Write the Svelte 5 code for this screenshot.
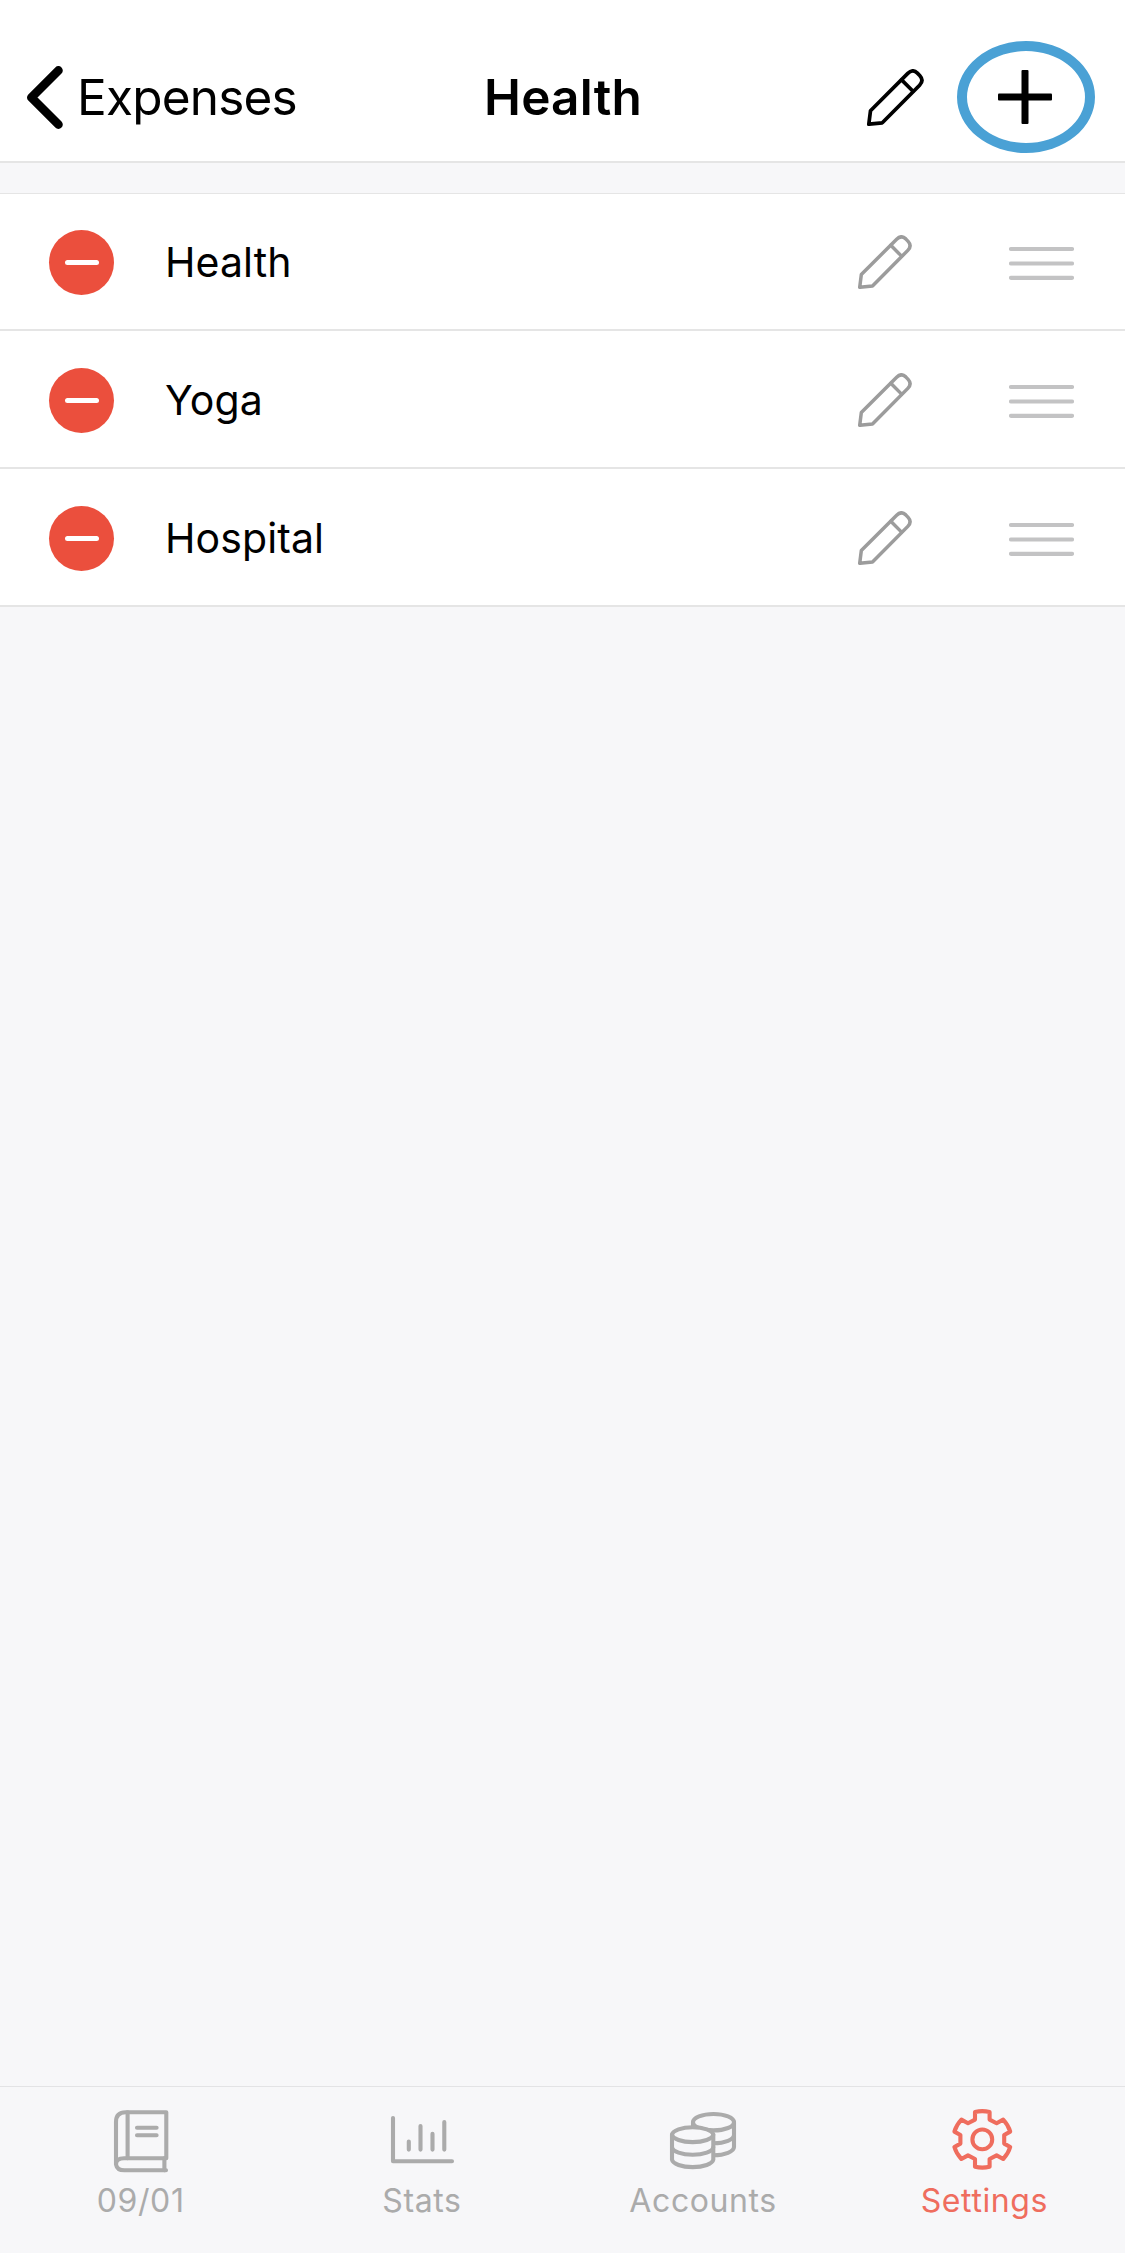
<script lang="ts">
	interface Tab {
		id: string;
		label: string;
	}

	let categories = $state(['Health', 'Yoga', 'Hospital']);
	let activeTab = $state('settings');

	const tabs: Tab[] = [
		{ id: 'diary', label: '09/01' },
		{ id: 'stats', label: 'Stats' },
		{ id: 'accounts', label: 'Accounts' },
		{ id: 'settings', label: 'Settings' }
	];

	function remove(name: string) {
		categories = categories.filter((c) => c !== name);
	}
</script>

{#snippet pencil(size: number)}
	<svg class="pencil" width={size} height={size} viewBox="0 0 57 57">
		<path
			d="M1.8 55.2 L3.5 41.8 L40.8 4.4 Q45.7 -0.4 50.4 4.1 L52.9 6.7 Q57.2 11.4 52.6 16.2 L15.3 53.8 Z"
		/>
		<path d="M34.6 10.9 L46 22.3" />
	</svg>
{/snippet}

<div class="screen">
	<header class="navbar">
		<button class="back">
			<svg width="44" height="70" viewBox="0 0 44 70">
				<path d="M34.4 8.5 L7.4 35.5 L34.4 62.5" />
			</svg>
			<span>Expenses</span>
		</button>
		<h1>Health</h1>
		<div class="actions">
			<button class="edit" aria-label="Edit">{@render pencil(57)}</button>
			<button class="add" aria-label="Add">
				<svg width="54" height="54" viewBox="0 0 54 54">
					<rect x="23.5" y="0" width="7" height="54" rx="1" />
					<rect x="0" y="23.5" width="54" height="7" rx="1" />
				</svg>
			</button>
		</div>
	</header>

	<ul class="list">
		{#each categories as name (name)}
			<li>
				<button class="remove" aria-label="Remove {name}" onclick={() => remove(name)}>
					<span class="minus"></span>
				</button>
				<span class="name">{name}</span>
				<button class="edit" aria-label="Edit {name}">{@render pencil(54)}</button>
				<svg class="handle" width="65" height="35" viewBox="0 0 65 35">
					<path d="M2 4 H63 M2 18.5 H63 M2 32.8 H63" />
				</svg>
			</li>
		{/each}
	</ul>

	<nav class="tabbar">
		{#each tabs as tab (tab.id)}
			<button class="tab" class:active={tab.id === activeTab} onclick={() => (activeTab = tab.id)}>
				<svg width="70" height="70" viewBox="0 0 70 70">
					{#if tab.id === 'diary'}
						<path d="M10 59.3 V17 Q10 7.3 19.7 7.3 H60.3 V53.3 H18 Q10 53.3 10 59.3 Q11 65.3 18.5 65.3 H60" />
						<path d="M21.6 7.3 V53.3 M58.4 53.3 V65.3" />
						<path d="M31 22.8 H50.6 M31 30.3 H50.6" />
					{:else if tab.id === 'stats'}
						<path d="M6 13 V56.2 H65" />
						<path d="M21.8 36.6 V44.6 M33.5 21 V44.6 M45.5 28.8 V44.6 M57.3 17 V44.6" />
					{:else if tab.id === 'accounts'}
						<path d="M25 17.2 V42 A20.5 8.2 0 0 0 66 42 V17.2" />
						<path d="M25 30 A20.5 8.2 0 0 0 66 30" />
						<ellipse cx="45.5" cy="17.2" rx="20.5" ry="8.2" />
						<path class="cover" d="M4 29.7 V54.7 A20.7 8 0 0 0 45.3 54.7 V29.7 A20.7 8 0 0 0 4 29.7 Z" />
						<path d="M4 42.3 A20.7 8 0 0 0 45.3 42.3" />
						<path d="M4 29.7 A20.7 8 0 0 0 45.3 29.7" />
					{:else}
						<path
							d="M26 14.6 V7 Q33.3 5.2 40.6 7 V14.6 L47.6 18.2 L54.2 14.6 Q59.3 20 61.2 26.6 L55.2 30 V38.6 L61.2 42 Q59.3 48.6 54.2 54 L47.6 50.4 L40.6 54 V61.8 Q33.3 63.4 26 61.8 V54 L19 50.4 L12.4 54 Q7.3 48.6 5.4 42 L11.4 38.6 V30 L5.4 26.6 Q7.3 20 12.4 14.6 L19 18.2 Z"
						/>
						<circle cx="33.3" cy="34.4" r="9.9" />
					{/if}
				</svg>
				<span>{tab.label}</span>
			</button>
		{/each}
	</nav>
</div>

<style>
	:global(body) {
		background: #f7f7f9;
	}

	.screen {
		display: flex;
		flex-direction: column;
		min-height: 2253px;
		font-family: Inter, 'Liberation Sans', sans-serif;
		color: #000;
	}

	button {
		padding: 0;
		border: 0;
		background: none;
		font: inherit;
		color: inherit;
	}

	svg {
		display: block;
		fill: none;
		stroke: currentColor;
		stroke-linecap: round;
		stroke-linejoin: round;
	}

	.navbar {
		display: grid;
		grid-template-columns: 1fr auto 1fr;
		align-items: center;
		box-sizing: border-box;
		height: 163px;
		padding-top: 33px;
		border-bottom: 2px solid #e5e5e5;
		background: #fff;
		font-size: 49.5px;
		line-height: 60px;
	}

	.back {
		display: flex;
		align-items: center;
		gap: 9px;
		padding-left: 24px;
		letter-spacing: -0.8px;
	}

	.back svg {
		stroke-width: 8.8;
	}

	h1 {
		margin: 0;
		padding-left: 1px;
		font-size: inherit;
		font-weight: 600;
		letter-spacing: 0.2px;
	}

	.actions {
		display: flex;
		align-items: center;
		justify-content: flex-end;
		gap: 33px;
		padding-right: 30px;
	}

	.pencil {
		stroke-width: 3.7;
	}

	.navbar .edit {
		margin-top: 1px;
	}

	.add {
		display: flex;
		align-items: center;
		justify-content: center;
		box-sizing: border-box;
		width: 138px;
		height: 112px;
		padding-right: 2px;
		border: 10px solid #4aa1d5;
		border-radius: 50%;
	}

	.add svg {
		fill: #000;
		stroke: none;
	}

	.list {
		flex: 1;
		margin: 30px 0 0;
		padding: 0;
		list-style: none;
		border-top: 1px solid #e5e5e5;
	}

	li {
		display: flex;
		align-items: center;
		box-sizing: border-box;
		height: 138px;
		padding: 3px 51px 0 49px;
		border-bottom: 2px solid #e5e5e5;
		background: #fff;
	}

	li:first-child {
		height: 137px;
		padding-top: 2px;
	}

	.remove {
		display: flex;
		align-items: center;
		justify-content: center;
		width: 65px;
		height: 65px;
		border-radius: 50%;
		background: #eb4f3d;
	}

	.minus {
		width: 34px;
		height: 5px;
		border-radius: 2.5px;
		background: #fff;
	}

	.name {
		flex: 1;
		margin-left: 51px;
		font-size: 41px;
		line-height: 51px;
		letter-spacing: 0.1px;
	}

	li .edit {
		margin: 0 97px 1px 0;
		color: #9c9c9c;
	}

	.handle {
		color: #c3c3c4;
		stroke-width: 4.2;
	}

	.tabbar {
		display: grid;
		grid-template-columns: repeat(4, 1fr);
		box-sizing: border-box;
		height: 167px;
		padding-top: 18px;
		border-top: 1px solid #e3e3e5;
	}

	.tab {
		display: flex;
		flex-direction: column;
		align-items: center;
		gap: 6px;
		color: #ababab;
		font-size: 32px;
		line-height: 40px;
		letter-spacing: 0.6px;
	}

	.tab svg {
		stroke-width: 4.1;
	}

	.tab.active {
		color: #ef6d5e;
	}

	.cover {
		fill: #f7f7f9;
	}
</style>
